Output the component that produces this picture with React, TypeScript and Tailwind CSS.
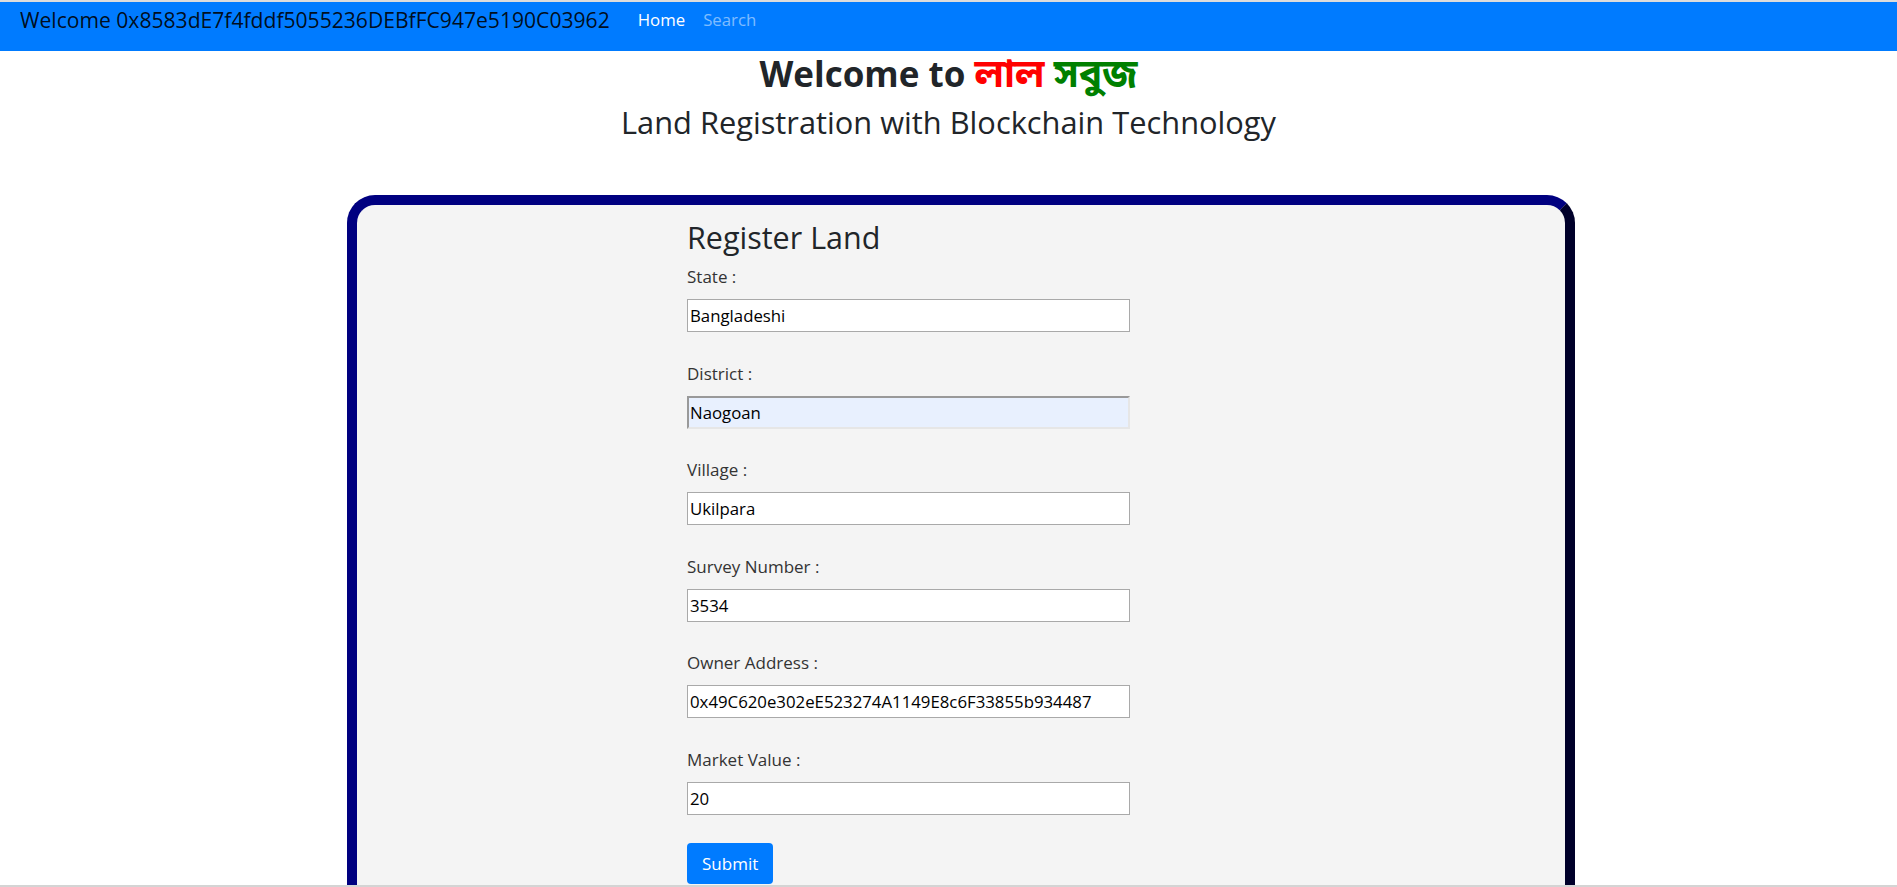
import React from "react";

const fields = [
  { label: "State :", value: "Bangladeshi" },
  { label: "District :", value: "Naogoan", autofill: true },
  { label: "Village :", value: "Ukilpara" },
  { label: "Survey Number :", value: "3534" },
  { label: "Owner Address :", value: "0x49C620e302eE523274A1149E8c6F33855b934487" },
  { label: "Market Value :", value: "20" },
];

export default function App() {
  return (
    <div className="h-[887px] flex flex-col overflow-hidden bg-white text-[#212529] font-['Open_Sans','Noto_Sans_Bengali','Noto_Sans',sans-serif]">
      <div className="h-[2px] bg-[#dcdcdc]" />

      {/* navbar */}
      <nav className="h-[49px] bg-[#007bff] flex items-start pl-[20px] pt-[3px]">
        <span className="text-[21.1px] leading-[30px] text-black/90">
          Welcome 0x8583dE7f4fddf5055236DEBfFC947e5190C03962
        </span>
        <ul className="flex gap-[18px] ml-[28px] text-[16.8px] leading-[30px]">
          <li className="text-white">Home</li>
          <li className="text-white/50">Search</li>
        </ul>
      </nav>

      <main className="flex-1 min-h-0">
        <h2 className="mt-[3px] h-[40px] text-center text-[35px] leading-[40px] font-bold">
          Welcome to{" "}
          <span className="text-[39px] leading-[36px] text-[#ff0000]">লাল</span>{" "}
          <span className="text-[39px] leading-[36px] text-[#008000]">সবুজ</span>
        </h2>
        <h3 className="mt-[10px] text-center text-[30.8px] leading-[36px] font-medium">
          Land Registration with Blockchain Technology
        </h3>

        <div className="mt-[55px] ml-[347px] w-[1228px] rounded-[28px] border-[10px] border-t-[#000080] border-l-[#000080] border-r-[#00002a] border-b-[#00002a] bg-[#f4f4f4] pt-[14px] pb-[60px] pl-[330px]">
          <h3 className="text-[30.5px] leading-[36px] font-medium">Register Land</h3>
          <form className="mt-[10px] w-[443px]">
            {fields.map((f) => (
              <div key={f.label} className="mb-[29.5px]">
                <label className="block text-[17px] leading-[24px] text-[#333]">
                  {f.label}
                </label>
                <input
                  readOnly
                  value={f.value}
                  className={
                    f.autofill
                      ? "mt-[10px] block w-full h-[33px] px-[1px] text-[16.8px] text-black outline-none border-2 border-t-[#999] border-l-[#999] border-r-[#e6e6e6] border-b-[#e6e6e6] bg-[#e8f0fe]"
                      : "mt-[10px] block w-full h-[33px] px-[2px] text-[16.8px] text-black outline-none border border-[#a9a9a9] bg-white"
                  }
                />
              </div>
            ))}
            <button
              type="button"
              className="-mt-[1px] h-[41px] px-[15px] rounded-[4px] bg-[#007bff] text-white text-[17px]"
            >
              Submit
            </button>
          </form>
        </div>
      </main>

      <div className="h-[2px] bg-[#d4d4d4]" />
    </div>
  );
}
